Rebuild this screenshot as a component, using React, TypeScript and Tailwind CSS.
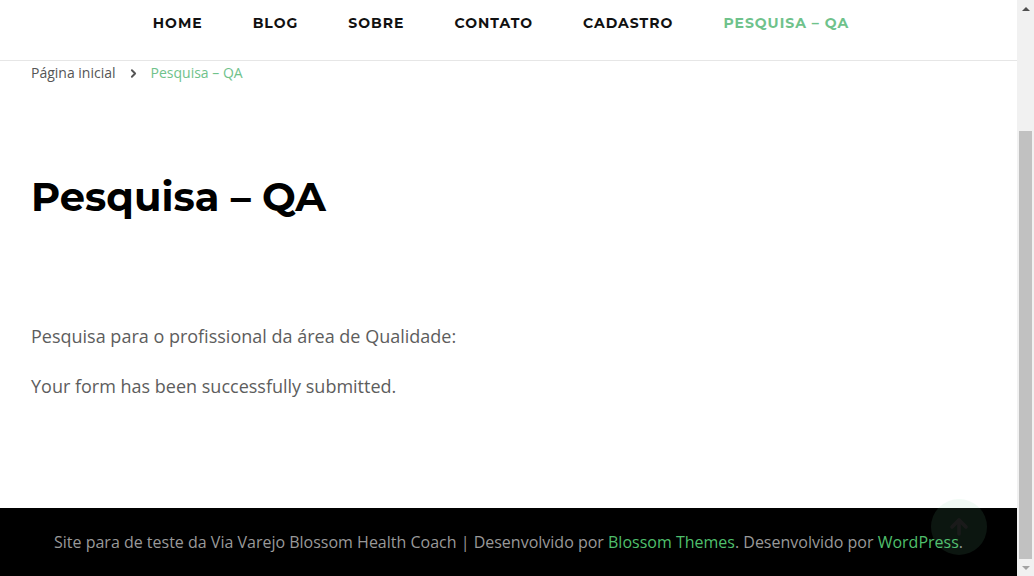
import { ArrowUp, ChevronRight } from "lucide-react";

const nav = ["Home", "Blog", "Sobre", "Contato", "Cadastro", "Pesquisa – QA"];

export default function App() {
  return (
    <div className="flex h-[576px] w-[1034px] overflow-hidden bg-white">
      <div className="relative flex w-[1017px] flex-col">
        <header className="flex h-[61px] shrink-0 items-start justify-center border-b border-[#e6e6e6] pr-[15px] pt-[13px]">
          <nav className="flex gap-[50px] font-['Montserrat','Inter',sans-serif] text-[14px] font-bold uppercase tracking-[1px]">
            {nav.map((n, i) => (
              <a
                key={n}
                className={i === nav.length - 1 ? "text-[#6fc28b]" : "text-[#111]"}
              >
                {n}
              </a>
            ))}
          </nav>
        </header>

        <main className="flex flex-1 flex-col px-[31px] font-['Open_Sans',sans-serif]">
          <div className="mt-[2px] flex items-center text-[14px] leading-[20px]">
            <span className="text-[#555]">Página inicial</span>
            <ChevronRight className="mx-[11px] h-[13px] w-[13px] text-[#555]" strokeWidth={3.5} />
            <span className="text-[#6fc28b]">Pesquisa – QA</span>
          </div>

          <h1 className="mt-[90px] font-['Montserrat','Inter',sans-serif] text-[40px] font-bold leading-[48px] text-black">
            Pesquisa – QA
          </h1>

          <p className="mt-[102px] text-[18px] leading-[26px] text-[#5d5d5d]">
            Pesquisa para o profissional da área de Qualidade:
          </p>
          <p className="mt-[24px] text-[18px] leading-[26px] text-[#5d5d5d]">
            Your form has been successfully submitted.
          </p>
        </main>

        <footer className="flex h-[68px] shrink-0 items-center justify-center bg-black pb-[1px] font-['Open_Sans',sans-serif] text-[16px] text-[#999]">
          <span>
            Site para de teste da Via Varejo Blossom Health Coach | Desenvolvido por{" "}
            <a className="text-[#4fbf6c]">Blossom Themes</a>. Desenvolvido por{" "}
            <a className="text-[#4fbf6c]">WordPress</a>.
          </span>
        </footer>

        <div className="absolute left-[931px] top-[499px] flex h-[56px] w-[56px] items-center justify-center rounded-full bg-[#78d2a0] opacity-10">
          <ArrowUp className="h-[24px] w-[24px] text-white" strokeWidth={3.5} />
        </div>
      </div>

      <div className="flex w-[17px] flex-col bg-[#f1f1f1]">
        <div className="flex h-[17px] items-center justify-center">
          <div className="h-0 w-0 border-x-[4px] border-b-[4px] border-x-transparent border-b-[#505050]" />
        </div>
        <div className="mx-[2px] mt-[114px] h-[428px] bg-[#c1c1c1]" />
        <div className="flex flex-1 items-center justify-center">
          <div className="h-0 w-0 border-x-[4px] border-t-[4px] border-x-transparent border-t-[#a3a3a3]" />
        </div>
      </div>
    </div>
  );
}
